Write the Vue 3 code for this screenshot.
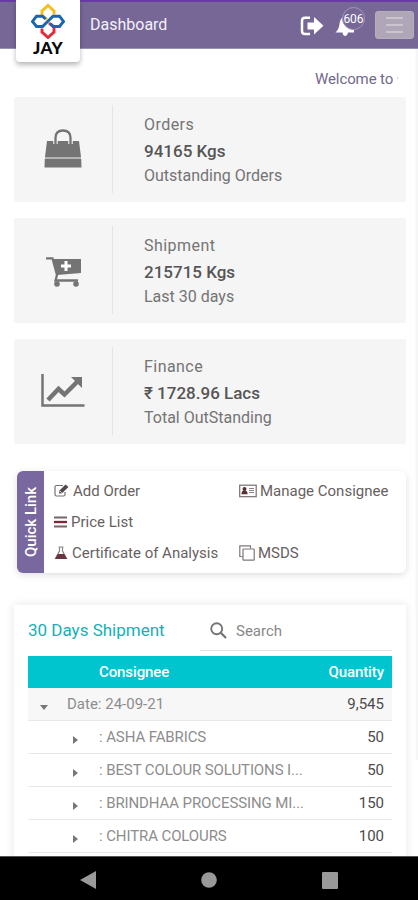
<script setup>
const cards = [
  { icon: 'bag', title: 'Orders', value: '94165 Kgs', note: 'Outstanding Orders' },
  { icon: 'cart', title: 'Shipment', value: '215715 Kgs', note: 'Last 30 days' },
  { icon: 'chart', title: 'Finance', value: '₹ 1728.96 Lacs', note: 'Total OutStanding' },
]
const rows = [
  { name: ': ASHA FABRICS', qty: '50' },
  { name: ': BEST COLOUR SOLUTIONS I...', qty: '50' },
  { name: ': BRINDHAA PROCESSING MI...', qty: '150' },
  { name: ': CHITRA COLOURS', qty: '100' },
]
</script>

<template>
  <div class="screen">
    <header class="topbar">
      <div class="logo">
        <svg class="mark" width="36" height="36" viewBox="0 0 36 36" fill="none" stroke-width="2.900">
          <path stroke="#f8bd18" d="M17 16.500L12 12.500V8L18 2.500 24 8V11.500" />
          <path stroke="#e52b38" d="M19 20L24 24.500V29L18 34.500 12 29V25.500" />
          <path stroke="#1767ae" d="M15.500 16L12.500 13.200H6.500L2.500 18.500 6.500 23.500H12.500L23 13.200H29.500L33.500 18.500 29.500 23.500H23.500L20.500 20.700" />
        </svg>
        <span class="brand">JAY</span>
      </div>
      <h1>Dashboard</h1>
      <svg class="signout" width="24" height="20" viewBox="0 0 24 20">
        <path d="M10 1.700H5Q2 1.700 2 4.700V15Q2 18 5 18H10" fill="none" stroke="#fff" stroke-width="2.500" />
        <path d="M7.500 6.500H14V1L23.500 9.800 14 18.500V13.500H7.500Z" fill="#fff" />
      </svg>
      <div class="bell">
        <svg width="22" height="22" viewBox="0 0 22 22">
          <path fill="#fff" d="M8 1Q5 3 4.500 8 4 13 .500 16.500H7.500Q8 20 10.500 20 12.500 19.500 13 16.500H19V14Q10 13 8 1Z" />
        </svg>
        <span class="count">606</span>
      </div>
      <button class="menu" aria-label="Menu"><i></i><i></i><i></i></button>
    </header>

    <p class="welcome">Welcome to <span>'</span></p>

    <main>
      <section v-for="c in cards" :key="c.title" class="stat">
        <div class="stat-icon">
          <svg v-if="c.icon === 'bag'" class="bag" width="38" height="40" viewBox="0 0 38 40">
            <path fill="#747474" d="M3 12H35L37 28H1ZM.800 30H37.200L37.500 38.500H.500Z" />
            <path fill="#b5b5b5" d="M1 28H37V30H1Z" />
            <path d="M11.500 15V9Q11.500 1.500 19 1.500T26.500 9V15" fill="none" stroke="#f5f5f5" stroke-width="4.500" />
            <path d="M11.500 15V9Q11.500 1.500 19 1.500T26.500 9V15" fill="none" stroke="#747474" stroke-width="2.300" />
          </svg>
          <svg v-else-if="c.icon === 'cart'" class="cart" width="36" height="30" viewBox="0 0 36 30">
            <path fill="#747474" d="M7 2H35V16L11 18Z" />
            <path d="M0 1.300H6.500L11 18 9.500 23.500H32" fill="none" stroke="#747474" stroke-width="2.300" />
            <path d="M20 4V14M15 9H25" stroke="#fff" stroke-width="3" />
            <circle cx="11" cy="27" r="2.800" fill="#747474" /><circle cx="30" cy="27" r="2.800" fill="#747474" />
          </svg>
          <svg v-else class="chart" width="44" height="34" viewBox="0 0 44 34">
            <path d="M1.500 0V31.500H43.500" fill="none" stroke="#747474" stroke-width="2.500" />
            <path d="M7 26L17.500 15 23.500 20.500 36 8" fill="none" stroke="#747474" stroke-width="4.500" />
            <path fill="#747474" d="M30 3H41V14Z" />
          </svg>
        </div>
        <div class="stat-text">
          <span class="stat-title">{{ c.title }}</span>
          <strong>{{ c.value }}</strong>
          <span class="stat-note">{{ c.note }}</span>
        </div>
      </section>

      <section class="quick">
        <div class="tab"><span>Quick Link</span></div>
        <nav class="links">
          <a class="add">
            <svg width="15" height="13" viewBox="0 0 15 13">
              <path d="M9 1.500H2.500Q1 1.500 1 3V10.500Q1 12 2.500 12H9.500Q11 12 11 10.500V8" fill="none" stroke="#776f6f" stroke-width="1.200" />
              <path d="M5 9.500L5.500 6.500 11.500.500 14.500 3 8 9.200Z" fill="#514848" /><path d="M6.200 7.200L7.500 8.500" stroke="#fff" />
            </svg>Add Order
          </a>
          <a class="manage">
            <svg width="18" height="14" viewBox="0 0 18 14">
              <rect x=".700" y="1.200" width="16.500" height="11.500" fill="#fff" stroke="#776f6f" stroke-width="1.200" />
              <circle cx="5.500" cy="5" r="2" fill="#572f35" /><path fill="#572f35" d="M2.300 10.200Q2.800 6.300 5.500 6.300T8.700 10.200Z" />
              <path d="M10 4.500H15M10 6.500H15M10 8.500H15" stroke="#8a8282" />
            </svg>Manage Consignee
          </a>
          <a class="price">
            <svg width="13" height="12" viewBox="0 0 13 12"><path d="M0 1.500H13M0 10.500H13" stroke="#766" stroke-width="1.800" /><path d="M0 6H13" stroke="#7d2638" stroke-width="2.300" /></svg>Price List
          </a>
          <a class="cert">
            <svg width="14" height="14" viewBox="0 0 13 14"><path d="M4 1H9M5 1V5L1 12.500H12L8 5V1" fill="none" stroke="#8c8787" stroke-width="1.200" /><path d="M3.300 8H9.700L12.500 13H.500Z" fill="#6b3540" /></svg>Certificate of Analysis
          </a>
          <a class="msds">
            <svg width="16" height="16" viewBox="0 0 16 16" fill="none" stroke="#807878" stroke-width="1.200"><path d="M3.500 11.500H.800V.800H11.500V3.500" /><rect x="4" y="4" width="11.200" height="11.200" rx=".500" /></svg>MSDS
          </a>
        </nav>
      </section>

      <section class="shipment">
        <div class="shipment-head">
          <h2>30 Days Shipment</h2>
          <label class="search">
            <svg width="17" height="17" viewBox="0 0 17 17" fill="none" stroke="#747474" stroke-width="1.900"><circle cx="6.700" cy="6.700" r="5.500" /><path d="M10.800 10.800L16 16" stroke-width="2.300" /></svg>
            <span>Search</span>
          </label>
        </div>
        <div class="row head"><span class="consignee">Consignee</span><span class="qty">Quantity</span></div>
        <div class="row group"><i class="arrow down"></i><span class="date">Date: 24-09-21</span><span class="qty">9,545</span></div>
        <div v-for="r in rows" :key="r.name" class="row item"><i class="arrow right"></i><span class="name">{{ r.name }}</span><span class="qty">{{ r.qty }}</span></div>
      </section>
    </main>

    <footer class="system">
      <svg width="16" height="18" viewBox="0 0 16 18"><path fill="#999" d="M16 0V18L0 9Z" /></svg>
      <svg width="16" height="16" viewBox="0 0 16 16"><circle cx="8" cy="8" r="7.800" fill="#999" /></svg>
      <svg width="16" height="17" viewBox="0 0 16 17"><rect width="16" height="17" rx="1" fill="#999" /></svg>
    </footer>
  </div>
</template>

<style>
body { margin: 0; background: #fff; }
</style>
<style scoped>
* { box-sizing: border-box; }
.screen { width: 418px; height: 900px; overflow: hidden; display: flex; flex-direction: column; background: linear-gradient(90deg, transparent 415px, #f6f6f6 416px) 0 0 / 100% 760px no-repeat #fff; font-family: Roboto, "Noto Sans", sans-serif; color: #666; }
.topbar { height: 49px; flex: none; display: flex; align-items: flex-start; background: #766797; border-top: 2px solid #673aa5; border-bottom: 1px solid #9b90b1; padding-left: 16px; }
.logo { width: 64px; height: 62px; margin-top: -2px; flex: none; background: #fff; border-radius: 0 0 4px 4px; box-shadow: 0 3px 5px rgba(0,0,0,.28); display: flex; flex-direction: column; align-items: center; padding-top: 3px; z-index: 1; }
.mark { flex: none; }
.brand { color: #080808; font: 900 17px/16px Lato, sans-serif; margin-top: 1px; letter-spacing: .4px; }
h1 { color: #f4f0fa; font-size: 16px; line-height: 22px; font-weight: 400; margin: 12px 0 0 10px; width: 210px; letter-spacing: 0; }
.signout { margin: 14px 0 0; flex: none; }
.bell { position: relative; width: 34px; height: 36px; margin: 4px 0 0 11px; flex: none; padding-top: 10px; }
.count { position: absolute; left: 7px; top: 1px; width: 23px; height: 23px; border: 1px solid #a397b6; border-radius: 50%; background: #766797; color: #fff; font-size: 12px; line-height: 22px; display: flex; justify-content: center; }
.menu { width: 39px; height: 28px; margin: 9px 0 0 6px; flex: none; border: 1px solid #b6aebd; border-radius: 3px; background: #afa7b7; padding: 0; display: flex; flex-direction: column; gap: 5px; align-items: center; justify-content: center; }
.menu i { width: 17px; height: 2px; background: #cac4ce; }
.welcome { height: 20px; margin: 20px 0 8px; padding-left: 315px; color: #716989; font-size: 15px; line-height: 20px; letter-spacing: -.1px; white-space: nowrap; flex: none; }
.welcome span { color: #bbb4c5; font-size: 9px; }
main { flex: 1; min-height: 0; overflow: hidden; padding: 0 12px 0 14px; }
.stat { height: 105px; margin-bottom: 16px; background: #f5f5f5; display: flex; padding-top: 8px; border-radius: 2px; }
.stat-icon { width: 99px; height: 88px; border-right: 1px solid #e4e4e4; display: flex; align-items: center; justify-content: center; }
.stat-icon .bag { margin-top: 0; }
.stat-icon .cart { margin: 3px 0 0 2px; }
.stat-text { padding: 7px 0 0 31px; display: flex; flex-direction: column; white-space: nowrap; }
.stat-text span { font-size: 16px; line-height: 26px; letter-spacing: .45px; color: #747474; }
.stat-text strong { font-size: 17px; line-height: 26px; font-weight: 500; color: #555; }
.stat-text .stat-note { line-height: 24px; letter-spacing: 0; }
.quick { height: 102px; margin: 27px 0 0 3px; width: 389px; display: flex; border-radius: 6px; box-shadow: 0 2px 7px rgba(0,0,0,.13); }
.tab { width: 27px; border-radius: 6px 0 0 6px; background: #7968a0; display: flex; align-items: center; justify-content: center; }
.tab span { writing-mode: vertical-rl; transform: rotate(180deg); color: #fff; font-size: 15px; font-weight: 500; line-height: 20px; white-space: nowrap; }
.links { flex: 1; display: grid; grid-template-columns: 185px 1fr; grid-template-rows: 31px 31px 31px; padding: 4px 0 0 10px; }
.links a { display: flex; align-items: center; gap: 4px; color: #685f60; font-size: 15px; line-height: 20px; white-space: nowrap; }
.links svg { flex: none; }
.links .manage, .links .msds { gap: 3px; }
.price { grid-column: 1; }
.cert { grid-row: 3; grid-column: 1; }
.msds { grid-row: 3; grid-column: 2; }
.shipment { margin: 32px 0 0; height: 270px; padding: 6px 14px; box-shadow: 0 0 9px rgba(0,0,0,.1); background: #fff; }
.shipment-head { height: 45px; display: flex; }
h2 { width: 172px; margin: 0; font-size: 17px; line-height: 39px; font-weight: 400; color: #17afb8; white-space: nowrap; }
.search { height: 40px; flex: 1; border-bottom: 1px solid #e1e1e1; display: flex; align-items: center; padding-left: 10px; gap: 9px; font-size: 15px; color: #888; }
.row { height: 33px; display: flex; align-items: center; border-bottom: 1px solid #e8e8e8; padding-right: 8px; font-size: 15px; white-space: nowrap; }
.row .qty { margin-left: auto; color: #4b4b4b; }
.head { height: 32px; background: #00c5ce; border: 0; color: #fff; font-weight: 500; letter-spacing: -.1px; }
.head .qty { color: #fff; }
.consignee { margin-left: 71px; }
.group { background: #f7f7f7; color: #8d8d8d; }
.item { color: #8d8d8d; }
.item .name { letter-spacing: -.1px; }
.arrow { flex: none; width: 0; height: 0; border: 4px solid transparent; }
.down { border-top: 5px solid #777; border-bottom: 0; margin: 6px 0 0 12px; }
.right { border-left: 5px solid #777; border-right: 0; margin: 6px 0 0 45px; }
.date { margin-left: 19px; }
.name { margin-left: 21px; }
.system { height: 44px; flex: none; background: #000; border-top: 1px solid #555; display: flex; align-items: center; justify-content: space-between; padding: 3px 80px 0; }
</style>
